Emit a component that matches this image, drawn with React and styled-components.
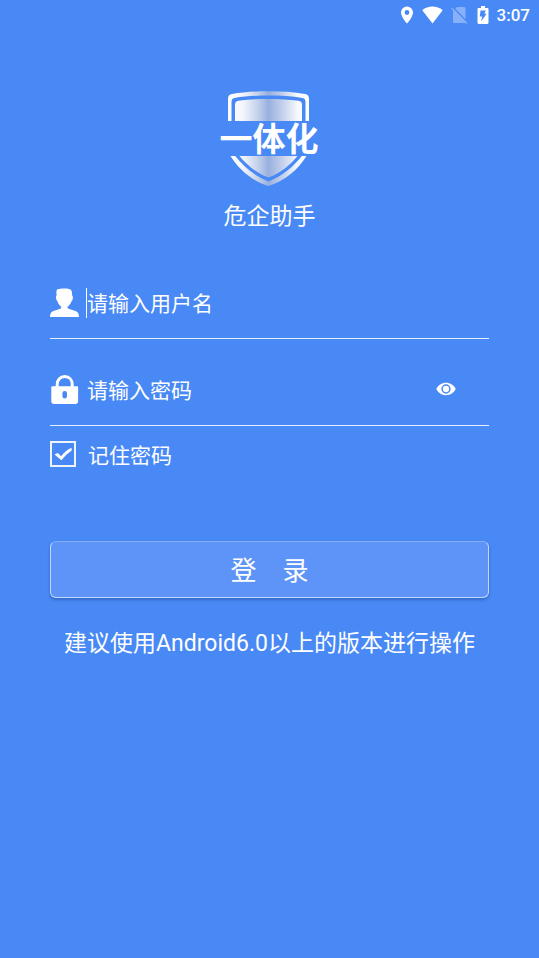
import React, { useState } from "react";
import styled, { createGlobalStyle } from "styled-components";

const GlobalStyle = createGlobalStyle`
  * { box-sizing: border-box; }
  html, body { margin: 0; background: #4889f5; }
  body, input, button {
    font-family: Roboto, "Noto Sans CJK SC", sans-serif;
    color: #fff;
  }
`;

const Page = styled.div`
  min-height: 100vh;
  background: #4889f5;
`;

const StatusBar = styled.header`
  display: flex;
  align-items: center;
  justify-content: flex-end;
  gap: 8px;
  height: 30px;
  padding-right: 9px;
  svg { display: block; }
`;

const Clock = styled.time`
  font-size: 17px;
  line-height: 20px;
  font-weight: 500;
`;

const Main = styled.main`
  display: flex;
  flex-direction: column;
  padding: 61px 50px 40px;
`;

const Logo = styled.svg`
  display: block;
  align-self: center;
`;

const LogoText = styled.text`
  font-family: "Noto Sans CJK SC", sans-serif;
  font-size: 33px;
  font-weight: 700;
  fill: #fff;
`;

const Title = styled.h1`
  margin: 13px 0 19px;
  font-size: 23px;
  line-height: 33px;
  font-weight: 400;
  text-align: center;
`;

const Form = styled.form`
  display: flex;
  flex-direction: column;
`;

const Field = styled.div`
  display: flex;
  align-items: center;
  padding: 36px 0 20px;
  border-bottom: 1px solid #e6effd;
`;

const FieldLabel = styled.label`
  display: flex;
  flex: none;
  width: 36px;
`;

const Caret = styled.span`
  flex: none;
  width: 1px;
  height: 30px;
  background: ${(p) => (p.$active ? "#fff" : "transparent")};
`;

const TextInput = styled.input`
  flex: 1;
  min-width: 0;
  height: 30px;
  padding: 2px 0 0;
  border: 0;
  outline: 0;
  background: transparent;
  font-size: 21px;
  caret-color: transparent;
  &::placeholder { color: #fff; opacity: 1; }
`;

const EyeButton = styled.button`
  display: flex;
  margin-right: 33px;
  padding: 0 0 2px;
  border: 0;
  background: none;
  cursor: pointer;
`;

const Remember = styled.label`
  display: flex;
  align-items: flex-start;
  gap: 12px;
  margin-top: 15px;
  font-size: 21px;
  line-height: 30px;
`;

const CheckWrap = styled.span`
  display: grid;
  place-items: center;
  > * { grid-area: 1 / 1; }
  svg { pointer-events: none; }
`;

const CheckInput = styled.input`
  appearance: none;
  width: 26px;
  height: 26px;
  margin: 0;
  border: 2px solid #eef4fe;
  &:not(:checked) + svg { visibility: hidden; }
`;

const LoginButton = styled.button`
  height: 57px;
  margin-top: 70px;
  padding: 2px 0 0;
  border: 1px solid #c3d7fb;
  border-top-color: #86affa;
  border-radius: 6px;
  background: #5e94f7;
  box-shadow: 0 2px 3px rgba(20, 60, 140, 0.4);
  font-size: 26px;
  line-height: 36px;
  cursor: pointer;
`;

const Note = styled.p`
  margin: 29px 0 0;
  font-size: 23px;
  line-height: 34px;
  text-align: center;
  white-space: nowrap;
  align-self: center;
`;

const StatusIcons = () => (
  <>
    <svg width="14" height="18" viewBox="0 0 14 18" fill="#fff" aria-hidden="true">
      <path fillRule="evenodd" d="M7 .5a6 6 0 0 0-6 6C1 11 7 17.500 7 17.500S13 11 13 6.500A6 6 0 0 0 7 .5Z M7 8.900a2.400 2.400 0 1 1 0-4.800 2.400 2.400 0 0 1 0 4.800Z" />
    </svg>
    <svg width="21" height="18" viewBox="0 0 21 18" fill="#fff" aria-hidden="true">
      <path d="M10.500 17.500.3 4.200C3.200 1.800 6.700.6 10.500.6s7.300 1.200 10.200 3.600Z" />
    </svg>
    <svg width="18" height="18" viewBox="1 0 18 18" aria-hidden="true">
      <path d="M7 1h7c1 0 1.500.5 1.500 1.500V17H4.500c-1 0-1.500-.5-1.500-1.500V5Z" fill="#86b0f9" />
      <path d="M3 1.500 18 16.500" stroke="#4889f5" strokeWidth="1.500" />
      <path d="M1.500 2 17 17.500" stroke="#86b0f9" strokeWidth="1.300" />
    </svg>
    <svg width="12" height="18" viewBox="0 0 12 18" aria-hidden="true">
      <path d="M4 0h4v2h2.300c.7 0 1.200.5 1.200 1.200v13.600c0 .7-.5 1.200-1.200 1.200H1.700C1 18 .5 17.500.5 16.800V3.200C.5 2.500 1 2 1.700 2H4Z" fill="#fff" />
      <path d="M3.500 4.500h5.300L7.400 7.800h2.300L4 15.500l1.200-5H2.800Z" fill="#4889f5" />
    </svg>
  </>
);

const ShieldLogo = () => (
  <Logo width="102" height="96" viewBox="1 0 102 96" role="img" aria-label="一体化">
    <defs>
      <linearGradient id="metal" x1="10" x2="91" y1="0" y2="0" gradientUnits="userSpaceOnUse">
        <stop offset="0" stopColor="#fff" />
        <stop offset="0.18" stopColor="#f4f6fb" />
        <stop offset="0.35" stopColor="#c9d5ed" />
        <stop offset="0.5" stopColor="#98b0df" />
        <stop offset="0.68" stopColor="#c6d2ec" />
        <stop offset="0.86" stopColor="#f6f8fc" />
        <stop offset="1" stopColor="#fff" />
      </linearGradient>
    </defs>
    <g fill="url(#metal)">
      <path d="M10 30V8c0-3 1.200-4.400 4-4.900C25 1 38 .3 50.500.3S76 1 87 3.100c2.800.5 4 1.900 4 4.900v22h-3.500V11c0-2.500-.8-3.600-3-4C74 5.200 62 4.600 50.500 4.600S27 5.200 16.500 7c-2.200.4-3 1.500-3 4v19Z" />
      <path d="M17 30V14c0-2.500 1-3.700 3.500-4.200C30 8.500 40 8 50.500 8s20.500.5 30 1.800C83 10.300 84 11.500 84 14v16Z" />
      <path d="M12.500 65h4.700C25 75 36 84.500 50.500 90.500 65 84.500 76 75 83.800 65h4.700C80.500 78 67 90 50.500 95 34 90 20.500 78 12.500 65Z" />
      <path d="M21.500 65h58C73 73 62.500 82.500 50.500 86.500 38.500 82.500 28 73 21.500 65Z" />
    </g>
    <LogoText x="51" y="60" textAnchor="middle">一体化</LogoText>
  </Logo>
);

const UserIcon = () => (
  <svg width="29" height="30" viewBox="0 0 29 30" fill="#fff" aria-hidden="true">
    <path d="M7 1.500C9.500.6 12 .3 15 .4c2.300 0 4.300.3 5.600 1.200 1.300 1 1.500 3.200 1.500 5.400 0 1 .8 1.200.8 2.200 0 1.600-.6 3.400-1.500 4.300-.7 2.400-2.300 4.200-3.800 5.200v1.500c2.500 1.600 8.800 2 10.500 4.800.7 1.200.9 2.700.9 4H0c0-1.300.2-2.800.9-4 1.700-2.800 8-3.200 10.300-4.800v-1.500c-1.500-1-3.100-2.800-3.600-5.200C6.700 12.600 6 10.800 6 9.200c0-1 .7-1.200.6-2.200-.2-2-.4-4 .4-5.500Z" />
  </svg>
);

const LockIcon = () => (
  <svg width="29" height="30" viewBox="0 0 29 30" aria-hidden="true">
    <path d="M7.200 13V9.500C7.200 4.800 10.300 1.600 14.700 1.600s7.500 3.200 7.500 7.900V13" fill="none" stroke="#fff" strokeWidth="3" />
    <path fillRule="evenodd" d="M2.200 11.200h25c.6 0 .9.4.9 1v14c0 1.800-1 2.800-2.800 2.800H4.100c-1.800 0-2.800-1-2.800-2.800v-14c0-.6.3-1 .9-1ZM14.700 16a2.300 2.300 0 0 0-2.300 2.300v3a2.300 2.300 0 0 0 4.600 0v-3a2.300 2.300 0 0 0-2.300-2.300Z" fill="#fff" />
  </svg>
);

const EyeIcon = () => (
  <svg width="20" height="14" viewBox="0 0 20 14" aria-hidden="true">
    <path d="M10 .8c4.300 0 8 2.500 9.700 6.200C18 10.700 14.300 13.200 10 13.200S2 10.700.3 7C2 3.300 5.700.8 10 .8Z" fill="#fff" />
    <circle cx="10" cy="7" r="3.900" fill="none" stroke="#4889f5" strokeWidth="1.500" />
  </svg>
);

export default function App() {
  const [shown, setShown] = useState(false);
  return (
    <Page>
      <GlobalStyle />
      <StatusBar>
        <StatusIcons />
        <Clock>3:07</Clock>
      </StatusBar>
      <Main>
        <ShieldLogo />
        <Title>危企助手</Title>
        <Form onSubmit={(e) => e.preventDefault()}>
          <Field>
            <FieldLabel htmlFor="username" aria-label="用户名"><UserIcon /></FieldLabel>
            <Caret $active />
            <TextInput id="username" placeholder="请输入用户名" autoComplete="username" />
          </Field>
          <Field>
            <FieldLabel htmlFor="password" aria-label="密码"><LockIcon /></FieldLabel>
            <Caret />
            <TextInput id="password" type={shown ? "text" : "password"} placeholder="请输入密码" autoComplete="current-password" />
            <EyeButton type="button" aria-label="显示密码" onClick={() => setShown(!shown)}><EyeIcon /></EyeButton>
          </Field>
          <Remember>
            <CheckWrap>
              <CheckInput type="checkbox" defaultChecked />
              <svg width="20" height="16" viewBox="0 0 20 16" aria-hidden="true">
                <path d="M1.500 8.500 4.800 7l3.400 3.200C11 6.500 14.500 3.600 18.500 1.800L18.700 4.500C14.500 7.500 11.500 10.500 8.500 14.200Z" fill="#fff" />
              </svg>
            </CheckWrap>
            记住密码
          </Remember>
          <LoginButton type="submit">登&#12288;录</LoginButton>
        </Form>
        <Note>建议使用Android6.0以上的版本进行操作</Note>
      </Main>
    </Page>
  );
}
